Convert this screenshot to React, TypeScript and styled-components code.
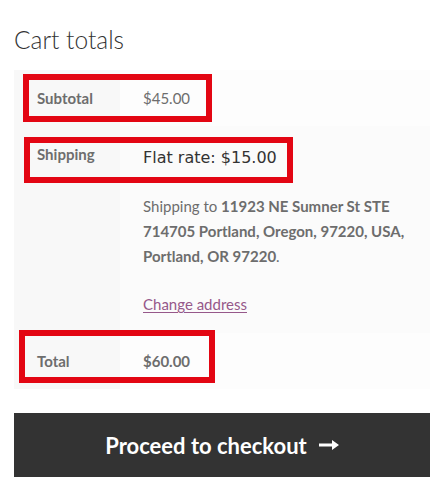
import React from "react";
import styled, { createGlobalStyle } from "styled-components";

const GlobalStyle = createGlobalStyle`
  html, body {
    margin: 0;
    padding: 0;
    background: #ffffff;
  }
  body {
    font-family: Lato, "Liberation Sans", sans-serif;
    color: #6d6d6d;
    -webkit-font-smoothing: antialiased;
  }
`;

const Page = styled.div`
  width: 439px;
  padding: 0 9px 0 14px;
  box-sizing: border-box;
`;

const Title = styled.h2`
  margin: 0 0 14px;
  padding-top: 24px;
  font-family: Lato, "Liberation Sans", sans-serif;
  font-weight: 300;
  font-size: 24.5px;
  line-height: 32px;
  color: #333333;
`;

const Totals = styled.div`
  width: 416px;
  display: flex;
  flex-direction: column;
`;

const Row = styled.div<{ $even?: boolean }>`
  position: relative;
  display: grid;
  grid-template-columns: 106px 1fr;
  > div:last-of-type {
    background: ${(p) => (p.$even ? "#fbfbfb" : "#fdfdfd")};
  }
`;

const Label = styled.div`
  background: #f8f8f8;
  padding: 16px 0 16px 23px;
  font-size: 15px;
  font-weight: 700;
  line-height: 24px;
  color: #6d6d6d;
`;

const Value = styled.div<{ $bold?: boolean }>`
  padding: 16px 23px;
  font-size: 15px;
  line-height: 24px;
  font-weight: ${(p) => (p.$bold ? 700 : 400)};
  color: #6d6d6d;
`;

const Rate = styled.div`
  font-family: "DejaVu Sans", Verdana, sans-serif;
  font-size: 16px;
  line-height: 32px;
  color: #333333;
`;

const Destination = styled.p`
  margin: 20px 0 23px;
  font-size: 15px;
  line-height: 25px;
  color: #6d6d6d;
  strong {
    font-weight: 700;
  }
`;

const ChangeLink = styled.a`
  display: block;
  font-size: 15px;
  line-height: 25px;
  color: #96588a;
  text-decoration: underline;
  text-underline-offset: 2px;
`;

const Highlight = styled.span<{ $l: number; $t: number; $w: number; $h: number }>`
  position: absolute;
  left: ${(p) => p.$l}px;
  top: ${(p) => p.$t}px;
  width: ${(p) => p.$w}px;
  height: ${(p) => p.$h}px;
  box-sizing: border-box;
  border: 6px solid #e30613;
  pointer-events: none;
  z-index: 2;
`;

const Checkout = styled.button`
  margin-top: 24px;
  width: 416px;
  height: 64px;
  border: none;
  background: #333333;
  color: #ffffff;
  font-family: Lato, "Liberation Sans", sans-serif;
  font-size: 22px;
  font-weight: 700;
  display: flex;
  align-items: center;
  justify-content: center;
  gap: 12px;
  cursor: pointer;
`;

const Arrow = () => (
  <svg width="20" height="14" viewBox="0 0 20 14" aria-hidden="true">
    <path d="M0 5.4h13V2L20 7l-7 5V8.6H0z" fill="#ffffff" />
  </svg>
);

export default function App() {
  return (
    <>
      <GlobalStyle />
      <Page>
        <Title>Cart totals</Title>
        <Totals>
          <Row>
            <Label>Subtotal</Label>
            <Value>$45.00</Value>
            <Highlight $l={9} $t={4} $w={189} $h={48} />
          </Row>
          <Row $even>
            <Label>Shipping</Label>
            <Value>
              <Rate>Flat rate: $15.00</Rate>
              <Destination>
                Shipping to <strong>11923 NE Sumner St STE</strong>
                <br />
                <strong>714705 Portland, Oregon, 97220, USA,</strong>
                <br />
                <strong>Portland, OR 97220</strong>.
              </Destination>
              <ChangeLink href="#">Change address</ChangeLink>
            </Value>
            <Highlight $l={10} $t={11} $w={269} $h={46} />
          </Row>
          <Row>
            <Label>Total</Label>
            <Value $bold>$60.00</Value>
            <Highlight $l={5} $t={-3} $w={196} $h={53} />
          </Row>
        </Totals>
        <Checkout>
          Proceed to checkout <Arrow />
        </Checkout>
      </Page>
    </>
  );
}
